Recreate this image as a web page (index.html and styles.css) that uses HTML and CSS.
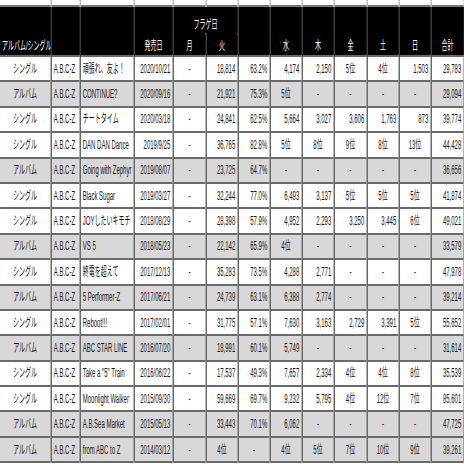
FILE: index.html
```html
<!DOCTYPE html>
<html lang="ja">
<head>
<meta charset="utf-8">
<title>A.B.C-Z 売上</title>
<link rel="stylesheet" href="styles.css">
</head>
<body>
<div class="frame">
<div class="sheet">
<table class="grid">
<colgroup>
<col class="w-type"><col class="w-artist"><col class="w-title"><col class="w-date">
<col class="w-day"><col class="w-num"><col class="w-num"><col class="w-num"><col class="w-num">
<col class="w-day"><col class="w-num"><col class="w-num"><col class="w-day">
</colgroup>
<thead>
<tr class="gap"><td></td><td></td><td></td><td></td><td></td><td></td><td></td><td></td><td></td><td></td><td></td><td></td><td></td></tr>
<tr class="hd1">
<th rowspan="2" class="l">アルバム/シングル</th>
<th rowspan="2"></th>
<th rowspan="2"></th>
<th rowspan="2">発売日</th>
<th colspan="2" class="top">フラゲ日</th>
<th rowspan="2"></th>
<th rowspan="2">水</th>
<th rowspan="2">木</th>
<th rowspan="2">金</th>
<th rowspan="2">土</th>
<th rowspan="2">日</th>
<th rowspan="2">合計</th>
</tr>
<tr class="hd2"><th>月</th><th>火</th></tr>
</thead>
<tbody class="data">
<tr><td class="c">シングル</td><td>A.B.C-Z</td><td>頑張れ、友よ！</td><td class="r">2020/10/21</td><td class="c">-</td><td class="r">18,814</td><td class="r">63.2%</td><td class="r">4,174</td><td class="r">2,150</td><td class="c">5位</td><td class="c">4位</td><td class="r">1,503</td><td class="r">29,783</td></tr>
<tr class="album"><td class="c">アルバム</td><td>A.B.C-Z</td><td>CONTINUE?</td><td class="r">2020/09/16</td><td class="c">-</td><td class="r">21,921</td><td class="r">75.3%</td><td class="c">5位</td><td class="c">-</td><td class="c">-</td><td class="c">-</td><td class="c">-</td><td class="r">29,094</td></tr>
<tr><td class="c">シングル</td><td>A.B.C-Z</td><td>チートタイム</td><td class="r">2020/03/18</td><td class="c">-</td><td class="r">24,841</td><td class="r">62.5%</td><td class="r">5,664</td><td class="r">3,027</td><td class="r">3,606</td><td class="r">1,763</td><td class="r">873</td><td class="r">39,774</td></tr>
<tr><td class="c">シングル</td><td>A.B.C-Z</td><td>DAN DAN Dance</td><td class="r">2019/9/25</td><td class="c">-</td><td class="r">36,765</td><td class="r">82.8%</td><td class="c">5位</td><td class="c">8位</td><td class="c">9位</td><td class="c">8位</td><td class="c">13位</td><td class="r">44,428</td></tr>
<tr class="album"><td class="c">アルバム</td><td>A.B.C-Z</td><td>Going with Zephyr</td><td class="r">2019/08/07</td><td class="c">-</td><td class="r">23,725</td><td class="r">64.7%</td><td class="c">-</td><td class="c">-</td><td class="c">-</td><td class="c">-</td><td class="c">-</td><td class="r">36,656</td></tr>
<tr><td class="c">シングル</td><td>A.B.C-Z</td><td>Black Sugar</td><td class="r">2019/03/27</td><td class="c">-</td><td class="r">32,244</td><td class="r">77.0%</td><td class="r">6,493</td><td class="r">3,137</td><td class="c">5位</td><td class="c">5位</td><td class="c">5位</td><td class="r">41,874</td></tr>
<tr><td class="c">シングル</td><td>A.B.C-Z</td><td>JOYしたいキモチ</td><td class="r">2018/08/29</td><td class="c">-</td><td class="r">28,398</td><td class="r">57.9%</td><td class="r">4,952</td><td class="r">2,293</td><td class="r">3,250</td><td class="r">3,445</td><td class="c">6位</td><td class="r">49,021</td></tr>
<tr class="album"><td class="c">アルバム</td><td>A.B.C-Z</td><td>VS 5</td><td class="r">2018/05/23</td><td class="c">-</td><td class="r">22,142</td><td class="r">65.9%</td><td class="c">4位</td><td class="c">-</td><td class="c">-</td><td class="c">-</td><td class="c">-</td><td class="r">33,579</td></tr>
<tr><td class="c">シングル</td><td>A.B.C-Z</td><td>終電を超えて</td><td class="r">2017/12/13</td><td class="c">-</td><td class="r">35,283</td><td class="r">73.5%</td><td class="r">4,288</td><td class="r">2,771</td><td class="c">-</td><td class="c">-</td><td class="c">-</td><td class="r">47,978</td></tr>
<tr class="album"><td class="c">アルバム</td><td>A.B.C-Z</td><td>5 Performer-Z</td><td class="r">2017/06/21</td><td class="c">-</td><td class="r">24,739</td><td class="r">63.1%</td><td class="r">6,388</td><td class="r">2,774</td><td class="c">-</td><td class="c">-</td><td class="c">-</td><td class="r">39,214</td></tr>
<tr><td class="c">シングル</td><td>A.B.C-Z</td><td>Reboot!!!</td><td class="r">2017/02/01</td><td class="c">-</td><td class="r">31,775</td><td class="r">57.1%</td><td class="r">7,630</td><td class="r">3,163</td><td class="r">2,729</td><td class="r">3,391</td><td class="c">5位</td><td class="r">55,652</td></tr>
<tr class="album"><td class="c">アルバム</td><td>A.B.C-Z</td><td>ABC STAR LINE</td><td class="r">2016/07/20</td><td class="c">-</td><td class="r">18,991</td><td class="r">60.1%</td><td class="r">5,749</td><td class="c">-</td><td class="c">-</td><td class="c">-</td><td class="c">-</td><td class="r">31,614</td></tr>
<tr><td class="c">シングル</td><td>A.B.C-Z</td><td>Take a "5" Train</td><td class="r">2016/06/22</td><td class="c">-</td><td class="r">17,537</td><td class="r">49.3%</td><td class="r">7,657</td><td class="r">2,334</td><td class="c">4位</td><td class="c">4位</td><td class="c">8位</td><td class="r">35,539</td></tr>
<tr><td class="c">シングル</td><td>A.B.C-Z</td><td>Moonlight Walker</td><td class="r">2015/09/30</td><td class="c">-</td><td class="r">59,669</td><td class="r">69.7%</td><td class="r">9,232</td><td class="r">5,795</td><td class="c">4位</td><td class="c">12位</td><td class="c">7位</td><td class="r">85,601</td></tr>
<tr class="album"><td class="c">アルバム</td><td>A.B.C-Z</td><td>A.B.Sea Market</td><td class="r">2015/05/13</td><td class="c">-</td><td class="r">33,443</td><td class="r">70.1%</td><td class="r">6,062</td><td class="c">-</td><td class="c">-</td><td class="c">-</td><td class="c">-</td><td class="r">47,725</td></tr>
<tr class="album"><td class="c">アルバム</td><td>A.B.C-Z</td><td>from ABC to Z</td><td class="r">2014/03/12</td><td class="c">-</td><td class="c">4位</td><td class="c">-</td><td class="c">4位</td><td class="c">5位</td><td class="c">7位</td><td class="c">10位</td><td class="c">9位</td><td class="r">39,261</td></tr>
</tbody>
</table>
</div>
</div>
</body>
</html>
```
FILE: styles.css
```css
html, body {
  margin: 0;
  padding: 0;
  background: #ffffff;
  overflow: hidden;
}

.frame {
  width: 464px;
  height: 464px;
  overflow: hidden;
}

/* The sheet is laid out at double width and squeezed horizontally,
   giving the narrow, condensed look of the spreadsheet capture. */
.sheet {
  width: 928px;
  transform: scaleX(0.5);
  transform-origin: 0 0;
}

.grid {
  width: 928px;
  table-layout: fixed;
  border-collapse: collapse;
  font-family: "Liberation Sans", "Noto Sans CJK JP", sans-serif;
  font-size: 12px;
  color: #161616;
}

.w-type { width: 102px; }
.w-artist { width: 58px; }
.w-title { width: 108px; }
.w-date { width: 78px; }
.w-day { width: 66px; }
.w-num { width: 64px; }

.grid td,
.grid th {
  padding: 0 4px;
  white-space: nowrap;
  overflow: hidden;
  border-left: 3px solid #6a6a6a;
  border-right: 3px solid #6a6a6a;
  border-top: 2px solid #6a6a6a;
  border-bottom: 2px solid #6a6a6a;
  text-align: left;
  line-height: 14px;
}

.grid tr > :first-child { border-left: 0; }

.grid .gap td {
  height: 5px;
  padding: 0;
  background: #ffffff;
  border-top: 0;
  border-bottom: 0;
  border-left-color: #b8b8b8;
  border-right-color: #b8b8b8;
}

.grid thead th {
  background: #000000;
  color: #ffffff;
  font-weight: normal;
  vertical-align: bottom;
  text-align: center;
  padding-bottom: 2px;
  border-color: #3c3c3c;
  border-top-color: #777777;
  border-bottom-color: #6a6a6a;
}

.grid thead th.l { text-align: left; }

.hd1 { height: 28px; }
.hd2 { height: 22px; }

.grid thead th.top {
  vertical-align: bottom;
  padding-bottom: 1px;
  border-bottom-color: #000000;
}

.grid .hd2 th { border-top-color: #000000; }

.data tr { height: 25.4px; }
.data td { vertical-align: middle; background: #ffffff; }
.data tr.album td { background: #d8d8d8; }

.grid .c { text-align: center; }
.grid .r { text-align: right; }
```
